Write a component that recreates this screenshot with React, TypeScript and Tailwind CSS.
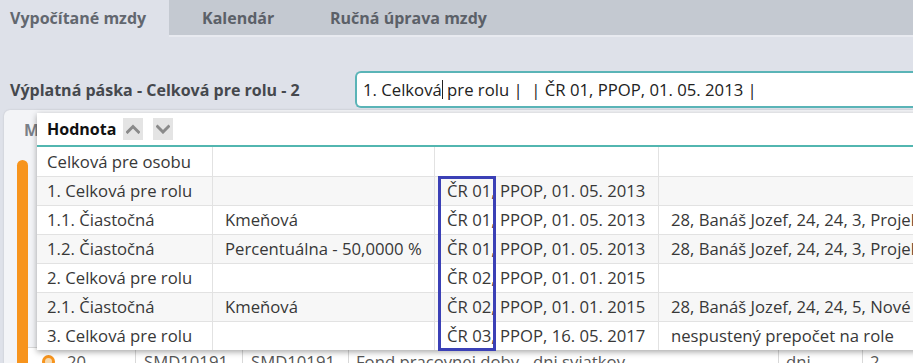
import React from "react";

const rows: [string, string, string, string][] = [
  ["Celková pre osobu", "", "", ""],
  ["1. Celková pre rolu", "", "ČR 01, PPOP, 01. 05. 2013", ""],
  ["1.1. Čiastočná", "Kmeňová", "ČR 01, PPOP, 01. 05. 2013", "28, Banáš Jozef, 24, 24, 3, Projekt"],
  ["1.2. Čiastočná", "Percentuálna - 50,0000 %", "ČR 01, PPOP, 01. 05. 2013", "28, Banáš Jozef, 24, 24, 3, Projekt"],
  ["2. Celková pre rolu", "", "ČR 02, PPOP, 01. 01. 2015", ""],
  ["2.1. Čiastočná", "Kmeňová", "ČR 02, PPOP, 01. 01. 2015", "28, Banáš Jozef, 24, 24, 5, Nové"],
  ["3. Celková pre rolu", "", "ČR 03, PPOP, 16. 05. 2017", "nespustený prepočet na role"],
];

function Chevron({ up }: { up?: boolean }) {
  return (
    <svg width="14" height="10" viewBox="0 0 14 10">
      <path
        d={up ? "M1.5 8 L7 2.5 L12.5 8" : "M1.5 2.5 L7 8 L12.5 2.5"}
        fill="none"
        stroke="#8a8a8a"
        strokeWidth="3"
        strokeLinecap="square"
        strokeLinejoin="miter"
      />
    </svg>
  );
}

export default function App() {
  return (
    <div
      className="relative w-[913px] h-[363px] overflow-hidden bg-[#dee1e9] text-[16px]"
      style={{ fontFamily: "'Open Sans', sans-serif" }}
    >
      {/* Tabs */}
      <div className="flex h-[35px] bg-[#c4c9d1] font-bold text-[#5b6068]">
        <div className="w-[169px] bg-[#dee1e9] pl-[10px] flex items-center text-[#62676f]">Vypočítané mzdy</div>
        <div className="w-[128px] pl-[33px] flex items-center">Kalendár</div>
        <div className="pl-[33px] flex items-center">Ručná úprava mzdy</div>
      </div>
      <div className="h-[2px] bg-[#e8eaf0] ml-[169px]" />

      {/* Label + input */}
      <div className="flex items-center h-[37px] mt-[34px]">
        <div className="w-[355px] pl-[10px] font-bold text-[#45484d]">Výplatná páska - Celková pre rolu - 2</div>
        <div className="flex-1 h-[37px] flex items-center bg-white border-2 border-r-0 border-[#5ab4b7] rounded-l-[6px] pl-[6px] text-[#222] text-[16.7px] whitespace-pre">
          <span>1. Celková</span>
          <span className="inline-block w-[1px] h-[19px] bg-[#222]" />
          <span> pre rolu |  | ČR 01, PPOP, 01. 05. 2013 |</span>
        </div>
      </div>

      {/* Background panel */}
      <div className="mt-[2px] ml-[4px] h-[300px] rounded-tl-[6px] bg-[#f3f4f7] shadow-[0_0_2px_rgba(0,0,0,0.15)]">
        <div className="h-[40px] pl-[20px] pt-[8px] font-bold text-[#7a7f87]">M</div>
        <div className="flex h-[260px]">
          <div className="ml-[13px] w-[11px] rounded-t-[6px] bg-[#f7941d] mt-[10px]" />
          <div className="flex-1 flex flex-col">
            <div className="h-[197px]" />
            <div className="flex h-[28px] bg-white text-[#555] border-t border-[#d8d8d8] whitespace-nowrap text-[16.7px]">
              <div className="w-[107px] flex items-center pl-[14px] gap-[12px]">
                <span className="inline-block w-[13px] h-[13px] rounded-full border-[3px] border-[#f7941d] bg-[#f5d9b0]" />
                <span>20</span>
              </div>
              <div className="w-[107px] border-l border-[#d8d8d8] flex items-center pl-[8px]">SMD10191</div>
              <div className="w-[106px] border-l border-[#d8d8d8] flex items-center pl-[8px]">SMD10191</div>
              <div className="w-[430px] border-l border-[#d8d8d8] flex items-center pl-[7px]">Fond pracovnej doby - dni sviatkov</div>
              <div className="w-[84px] border-l border-[#d8d8d8] flex items-center pl-[7px]">dni</div>
              <div className="flex-1 border-l border-[#d8d8d8] flex items-center pl-[7px]">2</div>
            </div>
          </div>
        </div>
      </div>

      {/* Dropdown overlay */}
      <div className="absolute left-[37px] top-[113px] w-[900px] bg-white shadow-[0_2px_6px_rgba(0,0,0,0.35)]">
        <div className="h-[32px] flex items-center pl-[10px] gap-[7px]">
          <span className="font-bold text-[#111]">Hodnota</span>
          <div className="flex gap-[10px]">
            <span className="w-[20px] h-[22px] bg-[#e4e4e4] flex items-center justify-center">
              <Chevron up />
            </span>
            <span className="w-[20px] h-[22px] bg-[#e4e4e4] flex items-center justify-center">
              <Chevron />
            </span>
          </div>
        </div>
        <div className="h-[2px] bg-[#52b6b0]" />
        {rows.map((r, i) => (
          <div
            key={i}
            className={`flex h-[29px] text-[#383838] text-[16.7px] whitespace-nowrap ${i > 0 ? "border-t border-[#e2e2e2]" : ""} ${i % 2 === 1 ? "bg-[#f7f7f7]" : "bg-white"}`}
          >
            <div className="w-[175px] pl-[10px] flex items-center">{r[0]}</div>
            <div className="w-[222px] border-l border-[#e2e2e2] pl-[12px] flex items-center">{r[1]}</div>
            <div className="w-[224px] border-l border-[#e2e2e2] pl-[12px] flex items-center">{r[2]}</div>
            <div className="flex-1 border-l border-[#e2e2e2] pl-[12px] flex items-center overflow-hidden">{r[3]}</div>
          </div>
        ))}
      </div>

      {/* Highlight rectangle */}
      <div className="absolute left-[438px] top-[176px] w-[58px] h-[175px] border-[3px] border-[#3b40b6]" />
    </div>
  );
}
